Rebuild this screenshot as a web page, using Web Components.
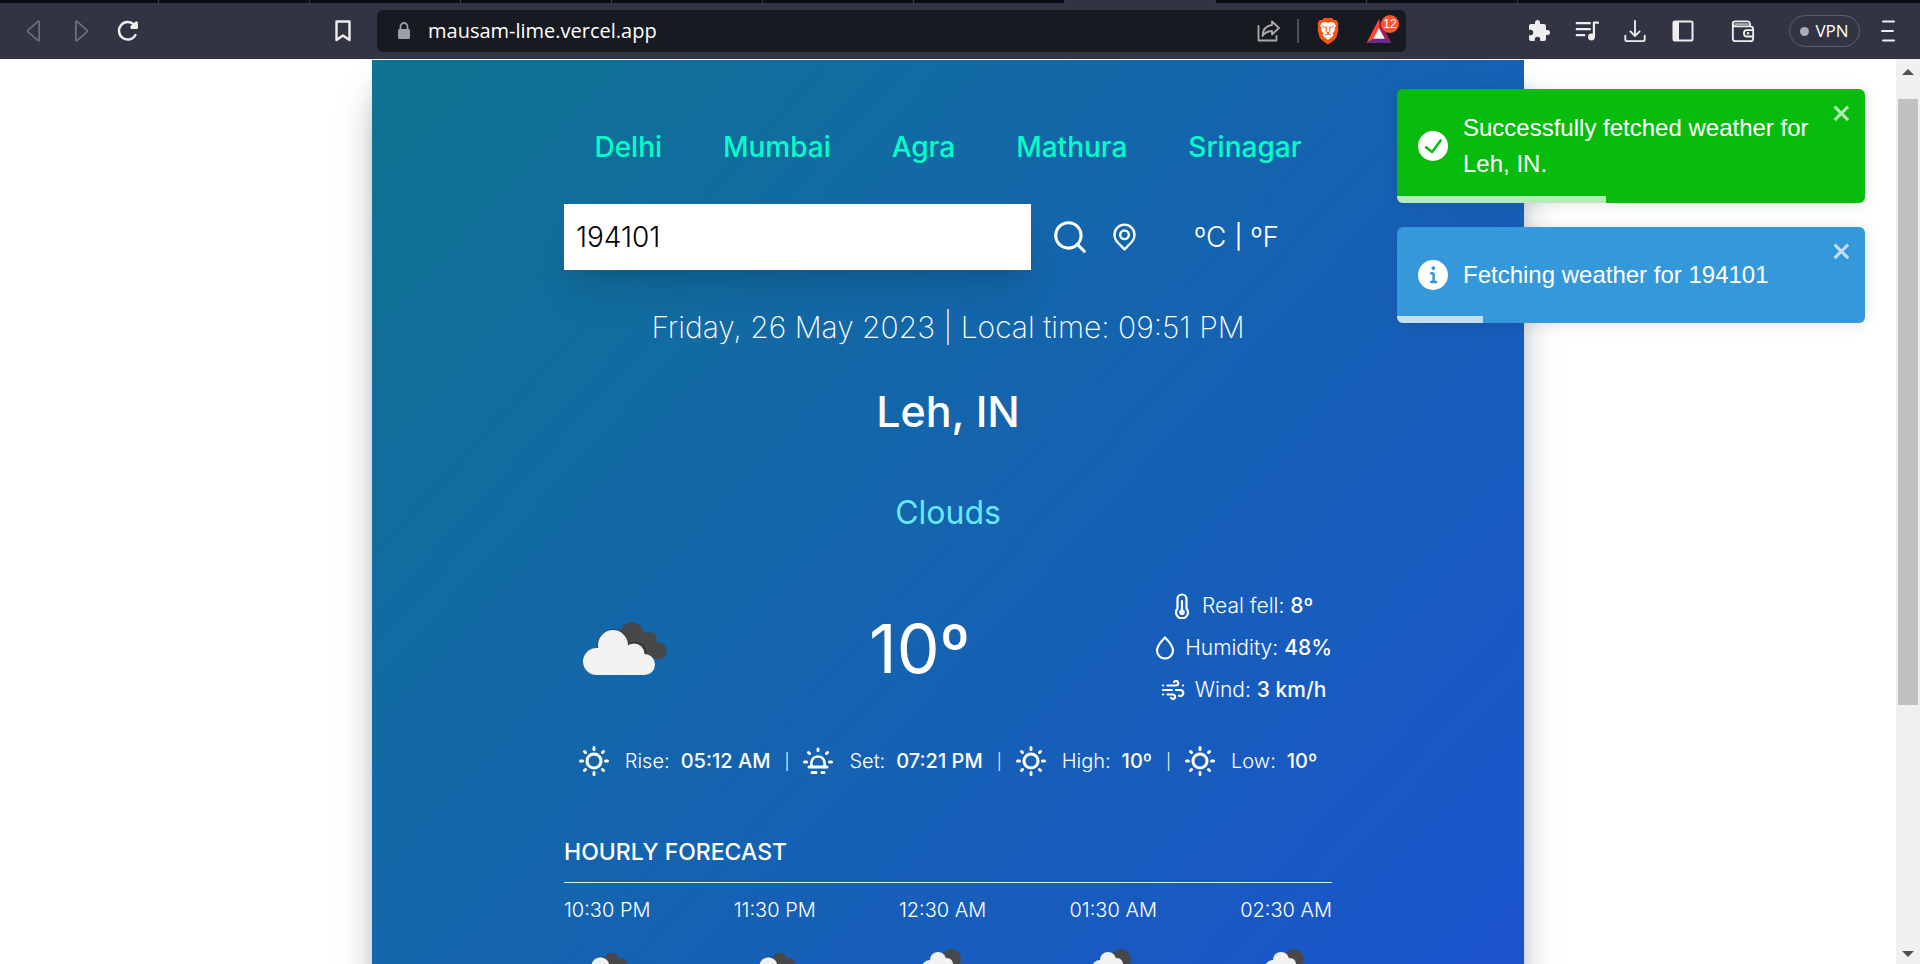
<!DOCTYPE html>
<html lang="en">
<head>
<meta charset="utf-8">
<title>Mausam</title>
<style>
html,body{margin:0;height:100%}
body{overflow:hidden;background:#fff;font-family:Inter,"Open Sans",sans-serif;color:#fff}
</style>
</head>
<body>
<browser-window>
  <weather-card>
    <city-link>Delhi</city-link>
    <city-link>Mumbai</city-link>
    <city-link>Agra</city-link>
    <city-link>Mathura</city-link>
    <city-link>Srinagar</city-link>
  </weather-card>
  <toast-message slot="toasts" kind="success" progress="209">Successfully fetched weather for Leh, IN.</toast-message>
  <toast-message slot="toasts" kind="info" progress="86">Fetching weather for 194101</toast-message>
</browser-window>

<script>
const S = 'fill="none" stroke="currentColor" stroke-linecap="round" stroke-linejoin="round"';
const sunRays = '<path d="M15 1.500v2M15 26.500v2M1.500 15h2M26.500 15h2M5.500 5.500l1 1M23.500 23.500l1 1M24.500 5.500l-1 1M5.500 24.500l1-1" stroke-width="3"/>';
const ICONS = {
  back: ['0 0 24 28', `<path d="M18 3.500v21q0 1.500-1.500.500L5 15q-1-1 0-2L16.500 3q1.500-1 1.500.500z" ${S} stroke-width="2"/>`],
  forward: ['0 0 24 28', `<path d="M6 3.500v21q0 1.500 1.500.500L19 15q1-1 0-2L7.500 3Q6 2 6 3.500z" ${S} stroke-width="2"/>`],
  reload: ['0 0 24 24', `<path d="M19.500 16A8.800 8.800 0 1 1 18 5.500" ${S} stroke-width="2.400"/><path d="M15 9.500h6.500V3.500q-1-1.500-2.500 0L15 7z" fill="currentColor" stroke="currentColor" stroke-linejoin="round"/>`],
  bookmark: ['0 0 20 24', `<path d="M3.500 2.500h13v18.500L10 16.500 3.500 21z" ${S} stroke-width="2.400"/>`],
  lock: ['0 0 16 20', `<path d="M4.500 9V5.500a3.500 3.500 0 0 1 7 0V9" ${S} stroke-width="1.800"/><rect x="2" y="8" width="12" height="10" rx="1.500" fill="currentColor"/>`],
  share: ['0 0 24 24', `<path d="M1.500 7v14.500h18V17" ${S} stroke-width="1.800"/><path d="M15 2.500l7 6.500-7 6.500V12q-6 0-9.500 5Q6 7 15 6z" ${S} stroke-width="1.800"/>`],
  brave: ['0 0 24 28', '<path d="M8 1h8l2 2h2.500l2 3.500-.5 2.500c1 3-.5 7-1.500 11-.8 2.500-4 4.500-8.500 7.500C7.500 24.500 4.300 22.500 3.500 20 2.500 16 1 12 2 9l-.5-2.500L3.500 3H6z" fill="#fb5412"/><path d="M9 5l3 1 3-1 3.500 1 1.500 3-1.500 2 .5 2-2.500 3.500 1 2-5.500 4.500-5.500-4.500 1-2L5 13l.5-2L4 9l1.500-3z" fill="#fff"/><path d="M6.500 9.500l4 1-.5 4 2 1.500 2-1.500-.5-4 4-1M9 18l3-1.200L15 18M12 16v2" fill="none" stroke="#fb5412" stroke-width="1"/>'],
  bat: ['0 0 28 28', '<path d="M14 0L0 27l8-5 6-12z" fill="#ff4724"/><path d="M14 0l14 27-8-5-6-12z" fill="#9e1f63"/><path d="M0 27h28l-8-5H8z" fill="#662d91"/><path d="M14 10l6.500 12h-13z" fill="#fff"/>'],
  puzzle: ['0 0 24 24', '<path d="M20.500 11H19V7a2 2 0 0 0-2-2h-4V3.500a2.500 2.500 0 0 0-5 0V5H4a2 2 0 0 0-2 2v3.800h1.500a2.700 2.700 0 0 1 0 5.400H2V20a2 2 0 0 0 2 2h3.800v-1.500a2.700 2.700 0 0 1 5.400 0V22H17a2 2 0 0 0 2-2v-4h1.500a2.500 2.500 0 0 0 0-5z" fill="currentColor"/>'],
  music: ['0 0 26 24', `<path d="M2 3.500h14M2 10h14M2 16.500h8" ${S} stroke-width="2.600"/><path d="M20.500 17.500V3H25" ${S} stroke-width="2.400"/><circle cx="17.800" cy="18.500" r="3.700" fill="currentColor"/>`],
  download: ['0 0 24 26', `<path d="M12 2v16M7 13.500l5 5 5-5M1.500 18v4.500q0 1.500 1.500 1.500h18q1.500 0 1.500-1.500V18" ${S} stroke-width="2"/>`],
  panel: ['0 0 24 24', `<rect x="2.500" y="2.500" width="19" height="19" rx="1.500" ${S} stroke-width="2"/><path d="M3 3h5v18H3z" fill="currentColor"/>`],
  wallet: ['0 0 26 26', `<path d="M2 5v16q0 3 3 3h16q3 0 3-3V11q0-3-3-3H5Q2 8 2 5q0-2.500 3-2.500h13q2 0 2.500 2V8M24 12h-7q-3 0-3 3.500t3 3.500h7" ${S} stroke-width="2"/><path d="M4 5.500h15" stroke="#aaa" stroke-width="2"/><circle cx="18.500" cy="15.500" r="1.300" fill="currentColor"/>`],
  menu: ['0 0 16 24', `<path d="M3 2.500h11M2 12h11M3 21.500h11" ${S} stroke-width="2"/>`],
  close: ['0 0 14 16', '<path fill="currentColor" fill-rule="evenodd" d="M7.710 8.230l3.750 3.750-1.480 1.480-3.750-3.750-3.750 3.750L1 11.980l3.750-3.750L1 4.480 2.480 3l3.750 3.750L9.980 3l1.480 1.480-3.750 3.750z"/>'],
  success: ['0 0 24 24', '<path fill="currentColor" d="M12 0a12 12 0 1012 12A12.014 12.014 0 0012 0zm6.927 8.200l-6.845 9.289a1.011 1.011 0 01-1.430.188l-4.888-3.908a1 1 0 111.250-1.562l4.076 3.261 6.227-8.451a1 1 0 111.610 1.183z"/>'],
  info: ['0 0 24 24', '<path fill="currentColor" d="M12 0a12 12 0 1012 12A12.013 12.013 0 0012 0zm.250 5a1.500 1.500 0 11-1.500 1.500 1.500 1.500 0 011.500-1.500zm2.250 13.500h-4a1 1 0 010-2h.750a.250.250 0 00.250-.250v-4.500a.250.250 0 00-.250-.250h-.750a1 1 0 010-2h1a2 2 0 012 2v4.750a.250.250 0 00.250.250h.750a1 1 0 110 2z"/>'],
  search: ['0 0 24 24', '<path fill="currentColor" d="M21.710 20.290L18 16.610A9 9 0 1 0 16.610 18l3.680 3.680a1 1 0 0 0 1.420 0 1 1 0 0 0 0-1.390zM11 18a7 7 0 1 1 7-7 7 7 0 0 1-7 7z"/>'],
  pin: ['0 0 24 26', `<path d="M12 1.500a9.300 9.300 0 0 0-9.300 9.300C2.700 16 6 18.500 12 24.500c6-6 9.300-8.500 9.300-13.700A9.300 9.300 0 0 0 12 1.500z" ${S} stroke-width="2.200"/><circle cx="12" cy="11" r="4" ${S} stroke-width="2.200"/>`],
  sun: ['0 0 30 30', `<g ${S}><circle cx="15" cy="15" r="7" stroke-width="3"/>${sunRays}</g>`],
  sunset: ['0 0 30 30', `<g ${S} stroke-width="3"><path d="M15 3v1.500M1.500 16h2M26.500 16h2M5.500 6.500l1 1M24.500 6.500l-1 1M6 21h18M9 26.500h4M19 26.500h2"/><path d="M9 21q-1-2-.5-5a6.600 6.600 0 0 1 13 0q.5 3-.5 5" stroke-width="2.600"/></g>`],
  thermometer: ['0 0 16 26', `<path d="M3.500 15.500V6a4.500 4.500 0 0 1 9 0v9.500a6 6 0 1 1-9 0z" ${S} stroke-width="2.200"/><path d="M8 8v11" ${S} stroke-width="2.200"/><circle cx="8" cy="19.300" r="2.800" fill="currentColor"/>`],
  drop: ['0 0 20 26', `<path d="M10 2.500C5 7.500 2 11 2 15.500a8 8 0 0 0 16 0C18 11 15 7.500 10 2.500z" ${S} stroke-width="2.200"/>`],
  wind: ['0 0 24 22', `<path d="M2 6.500h.1M6.500 6.500H15a2.300 2.300 0 1 0-2-3.500M22 6.500h.1M2 11h9M15 11h4a3 3 0 1 1-1 5.700M2 15.500h.1M6.500 15.500H12a2.200 2.200 0 1 1-2 3.300" ${S} stroke-width="2.200"/>`],
  clouds: ['0 0 120 120', '<g fill="#48484a"><circle cx="68" cy="46.500" r="12"/><circle cx="85" cy="52" r="8"/><circle cx="94" cy="63" r="8.500"/><path d="M64 52h24v18H70z"/></g><g fill="#2d3036" opacity=".6"><circle cx="49.500" cy="57" r="16"/><circle cx="71" cy="65" r="11.500"/></g><g fill="#f2f2f2"><circle cx="49" cy="57" r="15"/><circle cx="32.500" cy="73.500" r="13.500"/><circle cx="70" cy="66" r="10.500"/><circle cx="80.500" cy="76.500" r="10.500"/><path d="M32 60h38l11 14v13H32z"/></g>'],
  rain: ['0 0 72 72', '<circle cx="44" cy="27" r="10" fill="#48484a"/><g fill="#f2f2f2"><circle cx="31" cy="28" r="8"/><circle cx="23" cy="36" r="8"/><circle cx="40" cy="32" r="6"/><circle cx="47" cy="39" r="6"/><path d="M23 31h19v14H23z"/></g>']
};

class UiIcon extends HTMLElement {
  constructor() {
    super();
    this.attachShadow({ mode: 'open' });
  }
  static observedAttributes = ['name'];
  attributeChangedCallback() {
    const [box, body] = ICONS[this.getAttribute('name')];
    this.shadowRoot.innerHTML = `<style>:host{display:inline-flex;flex:none;width:24px;height:24px}svg{width:100%;height:100%;display:block}</style><svg viewBox="${box}" aria-hidden="true">${body}</svg>`;
  }
}
customElements.define('ui-icon', UiIcon);

const define = (name, html, ready) => customElements.define(name, class extends HTMLElement {
  constructor() {
    super();
    this.attachShadow({ mode: 'open' }).innerHTML = html;
  }
  connectedCallback() { if (ready) ready(this, this.shadowRoot); }
});

define('city-link', `<style>
:host{display:block}
a{color:#00ffc8;font-size:28px;line-height:42px;font-weight:500;text-decoration:none}
</style><a href="#"><slot></slot></a>`);

define('stat-item', `<style>
:host{display:flex;align-items:center;justify-content:center;gap:10px;font-size:21px;line-height:42px;font-weight:300;white-space:nowrap}
b{font-weight:500}
</style><slot name="icon"></slot><span><slot></slot> <b><slot name="value"></slot></b></span>`);

define('sun-item', `<style>
:host{display:flex;align-items:center}
ui-icon{width:30px;height:30px;margin-right:16px}
b{font-weight:500;margin-left:11px}
</style><ui-icon></ui-icon><span><slot></slot></span><b><slot name="value"></slot></b>`,
  (host, root) => root.querySelector('ui-icon').setAttribute('name', host.getAttribute('icon')));

define('hour-item', `<style>
:host{display:flex;flex-direction:column;align-items:center;gap:7px;font-size:20px;line-height:30px;font-weight:300;white-space:nowrap}
::slotted(ui-icon){width:72px;height:72px}
</style><span><slot></slot></span><slot name="icon"></slot>`);

define('toast-message', `<style>
:host{display:flex;position:relative;box-sizing:border-box;width:468px;min-height:96px;padding:21px;align-items:center;border-radius:6px;overflow:hidden;box-shadow:0 2px 15px rgba(0,0,0,.1);font:24px/36px "Liberation Sans",Arial,sans-serif;color:#fff;background:#3498db}
:host([kind=success]){background:#07bc0c}
.mark{width:30px;height:30px;margin-right:15px}
p{margin:0;flex:1;padding-right:22px}
button{position:absolute;top:12px;right:12px;width:21px;height:24px;padding:0;border:0;background:none;color:#fff;opacity:.7}
button ui-icon{width:21px;height:24px}
.bar{position:absolute;left:0;bottom:0;height:7px;background:rgba(255,255,255,.7)}
</style><ui-icon class="mark"></ui-icon><p><slot></slot></p><button aria-label="close"><ui-icon name="close"></ui-icon></button><div class="bar"></div>`,
  (host, root) => {
    root.querySelector('.mark').setAttribute('name', host.getAttribute('kind'));
    root.querySelector('.bar').style.width = host.getAttribute('progress') + 'px';
  });

define('weather-card', `<style>
:host{display:block;box-sizing:border-box;max-width:1152px;min-height:1250px;margin:1px auto 0;padding:66px 192px;background:linear-gradient(to bottom right,#0e7490,#1d4ed8);box-shadow:0 30px 38px -8px #9ca3af,0 12px 15px -9px #9ca3af}
nav{display:flex;justify-content:space-around}
form{display:flex;align-items:center;margin:36px 0;height:66px}
input{box-sizing:border-box;width:467px;height:66px;padding:12px;border:0;border-radius:0;outline:0;background:#fff;color:#000;font:300 28px/42px Inter,sans-serif;box-shadow:0 30px 38px -8px rgba(0,0,0,.1),0 12px 15px -9px rgba(0,0,0,.1)}
button{padding:0;border:0;background:none;color:inherit;font:300 28px/42px Inter,sans-serif;display:flex}
.search{margin-left:20px}.search ui-icon{width:38px;height:38px}
.locate{margin-left:22px}.locate ui-icon{width:27px;height:28px}
.units{display:flex;align-items:center;gap:8px;margin-left:56px;font-size:24px;line-height:42px}
.date{margin:0;text-align:center;font-size:30px;line-height:42px;font-weight:200}
h1{margin:36px 0 54px;text-align:center;font-size:43px;line-height:54px;font-weight:500}
.sky{margin:0;text-align:center;font-size:32px;line-height:42px;font-weight:400;color:#67e8f9}
.now{display:flex;justify-content:space-between;align-items:center;margin:51px 0 35px}
.now>ui-icon{width:120px;height:120px}
.temp{margin:0;font-size:68px;line-height:72px}
.therm{width:16px;height:26px;margin-right:2px}.drop{width:20px;height:26px}.wind{width:24px;height:22px}
.suns{display:flex;justify-content:center;align-items:center;gap:14px;font-size:20px;line-height:30px;font-weight:300;white-space:nowrap}
.suns>span{font-size:16px}
h2{margin:58px 0 12px;font-size:23px;line-height:36px;font-weight:500}
hr{margin:0 0 12px;border:0;border-top:1px solid #e5e7eb}
.hours{display:flex;justify-content:space-between}
</style>
<nav aria-label="Cities"><slot></slot></nav>
<form onsubmit="return false">
<input type="text" aria-label="City or postal code" value="194101">
<button class="search" aria-label="Search"><ui-icon name="search"></ui-icon></button>
<button type="button" class="locate" aria-label="Use my location"><ui-icon name="pin"></ui-icon></button>
<div class="units"><button type="button">ºC</button><span>|</span><button type="button">ºF</button></div>
</form>
<p class="date">Friday, 26 May 2023 | Local time: 09:51 PM</p>
<h1>Leh, IN</h1>
<p class="sky">Clouds</p>
<section class="now">
<ui-icon name="clouds"></ui-icon>
<p class="temp">10º</p>
<div class="stats">
<stat-item><ui-icon class="therm" slot="icon" name="thermometer"></ui-icon>Real fell:<span slot="value">8º</span></stat-item>
<stat-item><ui-icon class="drop" slot="icon" name="drop"></ui-icon>Humidity:<span slot="value">48%</span></stat-item>
<stat-item><ui-icon class="wind" slot="icon" name="wind"></ui-icon>Wind:<span slot="value">3 km/h</span></stat-item>
</div>
</section>
<section class="suns">
<sun-item icon="sun">Rise:<span slot="value">05:12 AM</span></sun-item><span>|</span>
<sun-item icon="sunset">Set:<span slot="value">07:21 PM</span></sun-item><span>|</span>
<sun-item icon="sun">High:<span slot="value">10º</span></sun-item><span>|</span>
<sun-item icon="sun">Low:<span slot="value">10º</span></sun-item>
</section>
<h2>HOURLY FORECAST</h2>
<hr>
<section class="hours">
<hour-item>10:30 PM<ui-icon slot="icon" name="clouds"></ui-icon></hour-item>
<hour-item>11:30 PM<ui-icon slot="icon" name="clouds"></ui-icon></hour-item>
<hour-item>12:30 AM<ui-icon slot="icon" name="rain"></ui-icon></hour-item>
<hour-item>01:30 AM<ui-icon slot="icon" name="rain"></ui-icon></hour-item>
<hour-item>02:30 AM<ui-icon slot="icon" name="rain"></ui-icon></hour-item>
</section>`);

define('browser-window', `<style>
:host{display:grid;grid-template-rows:3px 56px minmax(0,1fr);height:100vh}
.tabs{display:flex;background:#0b0b14;overflow:hidden;padding-left:8px}
.tabs i{box-sizing:border-box;flex:none;width:151px;border-right:1px solid #3d3f4a}
.tabs .on{background:#323443}
header{display:flex;align-items:center;background:#323443;color:#eee;font-family:"Open Sans","Noto Sans",sans-serif}
button{flex:none;display:flex;padding:0;border:0;background:none;color:inherit}
.left{display:flex;align-items:center;box-sizing:border-box;width:377px;padding:0 24px 0 22px}
.left .dim{color:#6d7080;margin-right:23px}
.left .mark{margin-left:auto}
.mark ui-icon{width:20px}
.url{flex:1;display:flex;align-items:center;height:42px;border-radius:6px;background:#171a21;padding:0 13px 0 19px}
.url a{flex:1;margin-left:16px;color:#fff;font-size:20px;line-height:30px;text-decoration:none}
.lock{width:16px;height:20px;color:#9b9da8}
.share{color:#aaa}
.url hr{width:2px;height:24px;margin:0 16px;border:0;background:#4d5059}
.brave ui-icon{width:26px;height:28px}
.bat{position:relative;margin-left:24px}.bat ui-icon{width:28px;height:25px}
.bat span{position:absolute;left:16px;top:-4px;width:18px;height:18px;border-radius:9px;background:#fb542b;color:#fff;font-size:12px;line-height:18px;text-align:center}
.right{display:flex;align-items:center;gap:24px;box-sizing:border-box;width:514px;padding-left:121px}
.right .wal{margin-left:12px}
.right .vpn{box-sizing:border-box;width:71px;height:32px;margin:0 -4px 0 10px;align-items:center;justify-content:center;gap:6px;border:1px solid #5b5e72;border-radius:16px;color:#fff;font:17px/24px "Open Sans",sans-serif}
.vpn i{width:9px;height:9px;border-radius:5px;background:#a9abbd}
.right .menu ui-icon{width:16px}
.view{position:relative;display:grid;grid-template-columns:minmax(0,1fr) 24px;min-height:0;overflow:hidden;background:#fff}
main{overflow:hidden}
.toasts{position:absolute;top:30px;right:55px;display:grid;gap:24px}
.scroll{display:flex;flex-direction:column;align-items:center;background:#f0f0f0}
.scroll svg{width:12px;height:6px;margin:10px 0}
.thumb{width:20px;height:606px;margin-top:14px;background:#c1c1c1}
.scroll .down{margin-top:auto;margin-bottom:7px}
</style>
<div class="tabs"><i></i><i></i><i></i><i></i><i></i><i></i><i></i><i class="on"></i><i></i><i></i></div>
<header>
<div class="left">
<button class="dim" aria-label="Back"><ui-icon name="back"></ui-icon></button>
<button class="dim" aria-label="Forward"><ui-icon name="forward"></ui-icon></button>
<button aria-label="Reload"><ui-icon name="reload"></ui-icon></button>
<button class="mark" aria-label="Bookmark"><ui-icon name="bookmark"></ui-icon></button>
</div>
<div class="url">
<ui-icon class="lock" name="lock"></ui-icon><a href="#">mausam-lime.vercel.app</a>
<button class="share" aria-label="Share"><ui-icon name="share"></ui-icon></button><hr>
<button class="brave" aria-label="Shields"><ui-icon name="brave"></ui-icon></button>
<button class="bat" aria-label="Rewards"><ui-icon name="bat"></ui-icon><span>12</span></button>
</div>
<div class="right">
<button aria-label="Extensions"><ui-icon name="puzzle"></ui-icon></button>
<button aria-label="Media"><ui-icon name="music"></ui-icon></button>
<button aria-label="Downloads"><ui-icon name="download"></ui-icon></button>
<button aria-label="Sidebar"><ui-icon name="panel"></ui-icon></button>
<button class="wal" aria-label="Wallet"><ui-icon name="wallet"></ui-icon></button>
<button class="vpn"><i></i>VPN</button>
<button class="menu" aria-label="Menu"><ui-icon name="menu"></ui-icon></button>
</div>
</header>
<div class="view">
<main><slot></slot></main>
<div class="scroll"><svg viewBox="0 0 12 6"><path d="M0 6l6-6 6 6z" fill="#505050"/></svg><div class="thumb"></div><svg class="down" viewBox="0 0 12 6"><path d="M0 0l6 6 6-6z" fill="#505050"/></svg></div>
<div class="toasts"><slot name="toasts"></slot></div>
</div>`);
</script>
</body>
</html>
